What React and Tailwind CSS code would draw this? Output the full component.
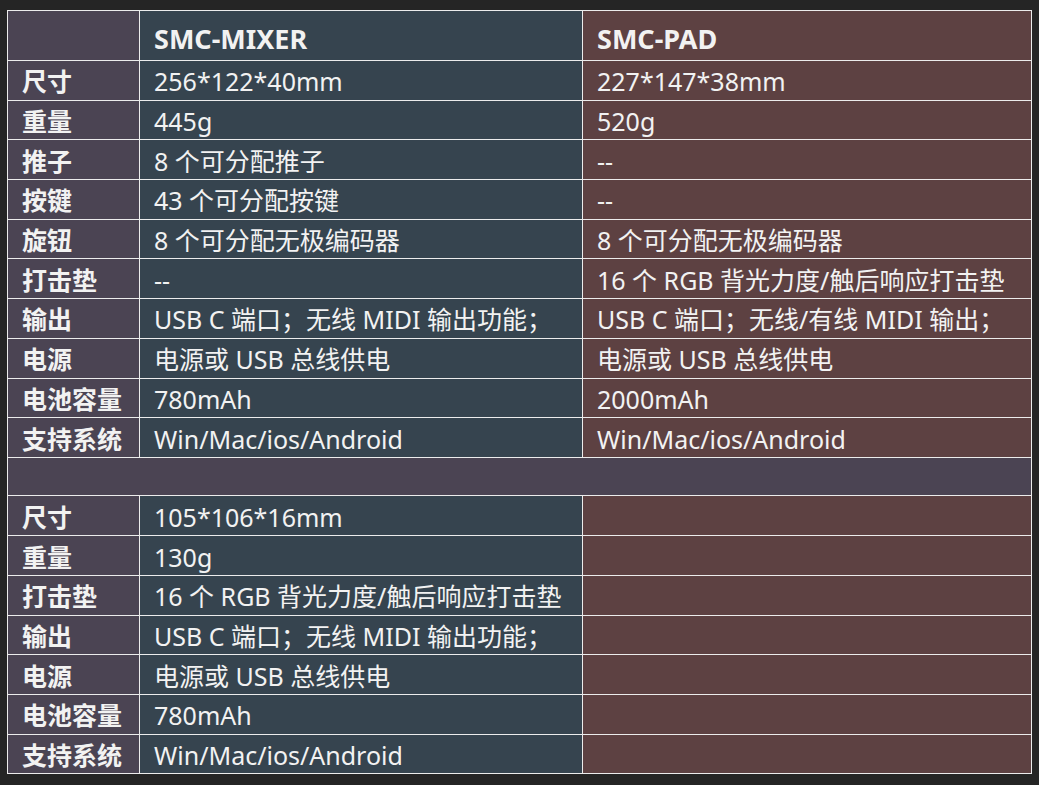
import React from "react";

const top = [
  ["尺寸", "256*122*40mm", "227*147*38mm"],
  ["重量", "445g", "520g"],
  ["推子", "8 个可分配推子", "--"],
  ["按键", "43 个可分配按键", "--"],
  ["旋钮", "8 个可分配无极编码器", "8 个可分配无极编码器"],
  ["打击垫", "--", "16 个 RGB 背光力度/触后响应打击垫"],
  ["输出", "USB C 端口；无线 MIDI 输出功能；", "USB C 端口；无线/有线 MIDI 输出；"],
  ["电源", "电源或 USB 总线供电", "电源或 USB 总线供电"],
  ["电池容量", "780mAh", "2000mAh"],
  ["支持系统", "Win/Mac/ios/Android", "Win/Mac/ios/Android"],
];

const bottom = [
  ["尺寸", "105*106*16mm", ""],
  ["重量", "130g", ""],
  ["打击垫", "16 个 RGB 背光力度/触后响应打击垫", ""],
  ["输出", "USB C 端口；无线 MIDI 输出功能；", ""],
  ["电源", "电源或 USB 总线供电", ""],
  ["电池容量", "780mAh", ""],
  ["支持系统", "Win/Mac/ios/Android", ""],
];

const cell = "border border-[#ececec] px-[14px] pt-[3px] whitespace-nowrap";

const Row = ({ row }) => (
  <tr className="h-[39.7px]">
    <td className={`${cell} bg-[#4b4453] font-bold`}>{row[0]}</td>
    <td className={`${cell} bg-[#36444f]`}>{row[1]}</td>
    <td className={`${cell} bg-[#5d4142]`}>{row[2]}</td>
  </tr>
);

export default function App() {
  return (
    <div
      className="w-[1039px] h-[785px] bg-[#252525] pt-[10px] pl-[7px]"
      style={{ fontFamily: "'Noto Sans', 'Noto Sans CJK SC', sans-serif" }}
    >
      <table className="border-collapse table-fixed w-[1024px] text-[25px] leading-none text-[#f2f2f2]">
        <colgroup>
          <col className="w-[132px]" />
          <col className="w-[443px]" />
          <col className="w-[449px]" />
        </colgroup>
        <tbody>
          <tr className="h-[50px]">
            <td className={`${cell} bg-[#4b4453]`}></td>
            <td className={`${cell} bg-[#36444f] font-bold text-[27px] align-bottom pb-[8px]`}>SMC-MIXER</td>
            <td className={`${cell} bg-[#5d4142] font-bold text-[27px] align-bottom pb-[8px]`}>SMC-PAD</td>
          </tr>
          {top.map((r, i) => (
            <Row key={i} row={r} />
          ))}
          <tr className="h-[38.6px]">
            <td colSpan={3} className="border border-[#ececec] bg-[#4b4453]"></td>
          </tr>
          {bottom.map((r, i) => (
            <Row key={i} row={r} />
          ))}
        </tbody>
      </table>
    </div>
  );
}
